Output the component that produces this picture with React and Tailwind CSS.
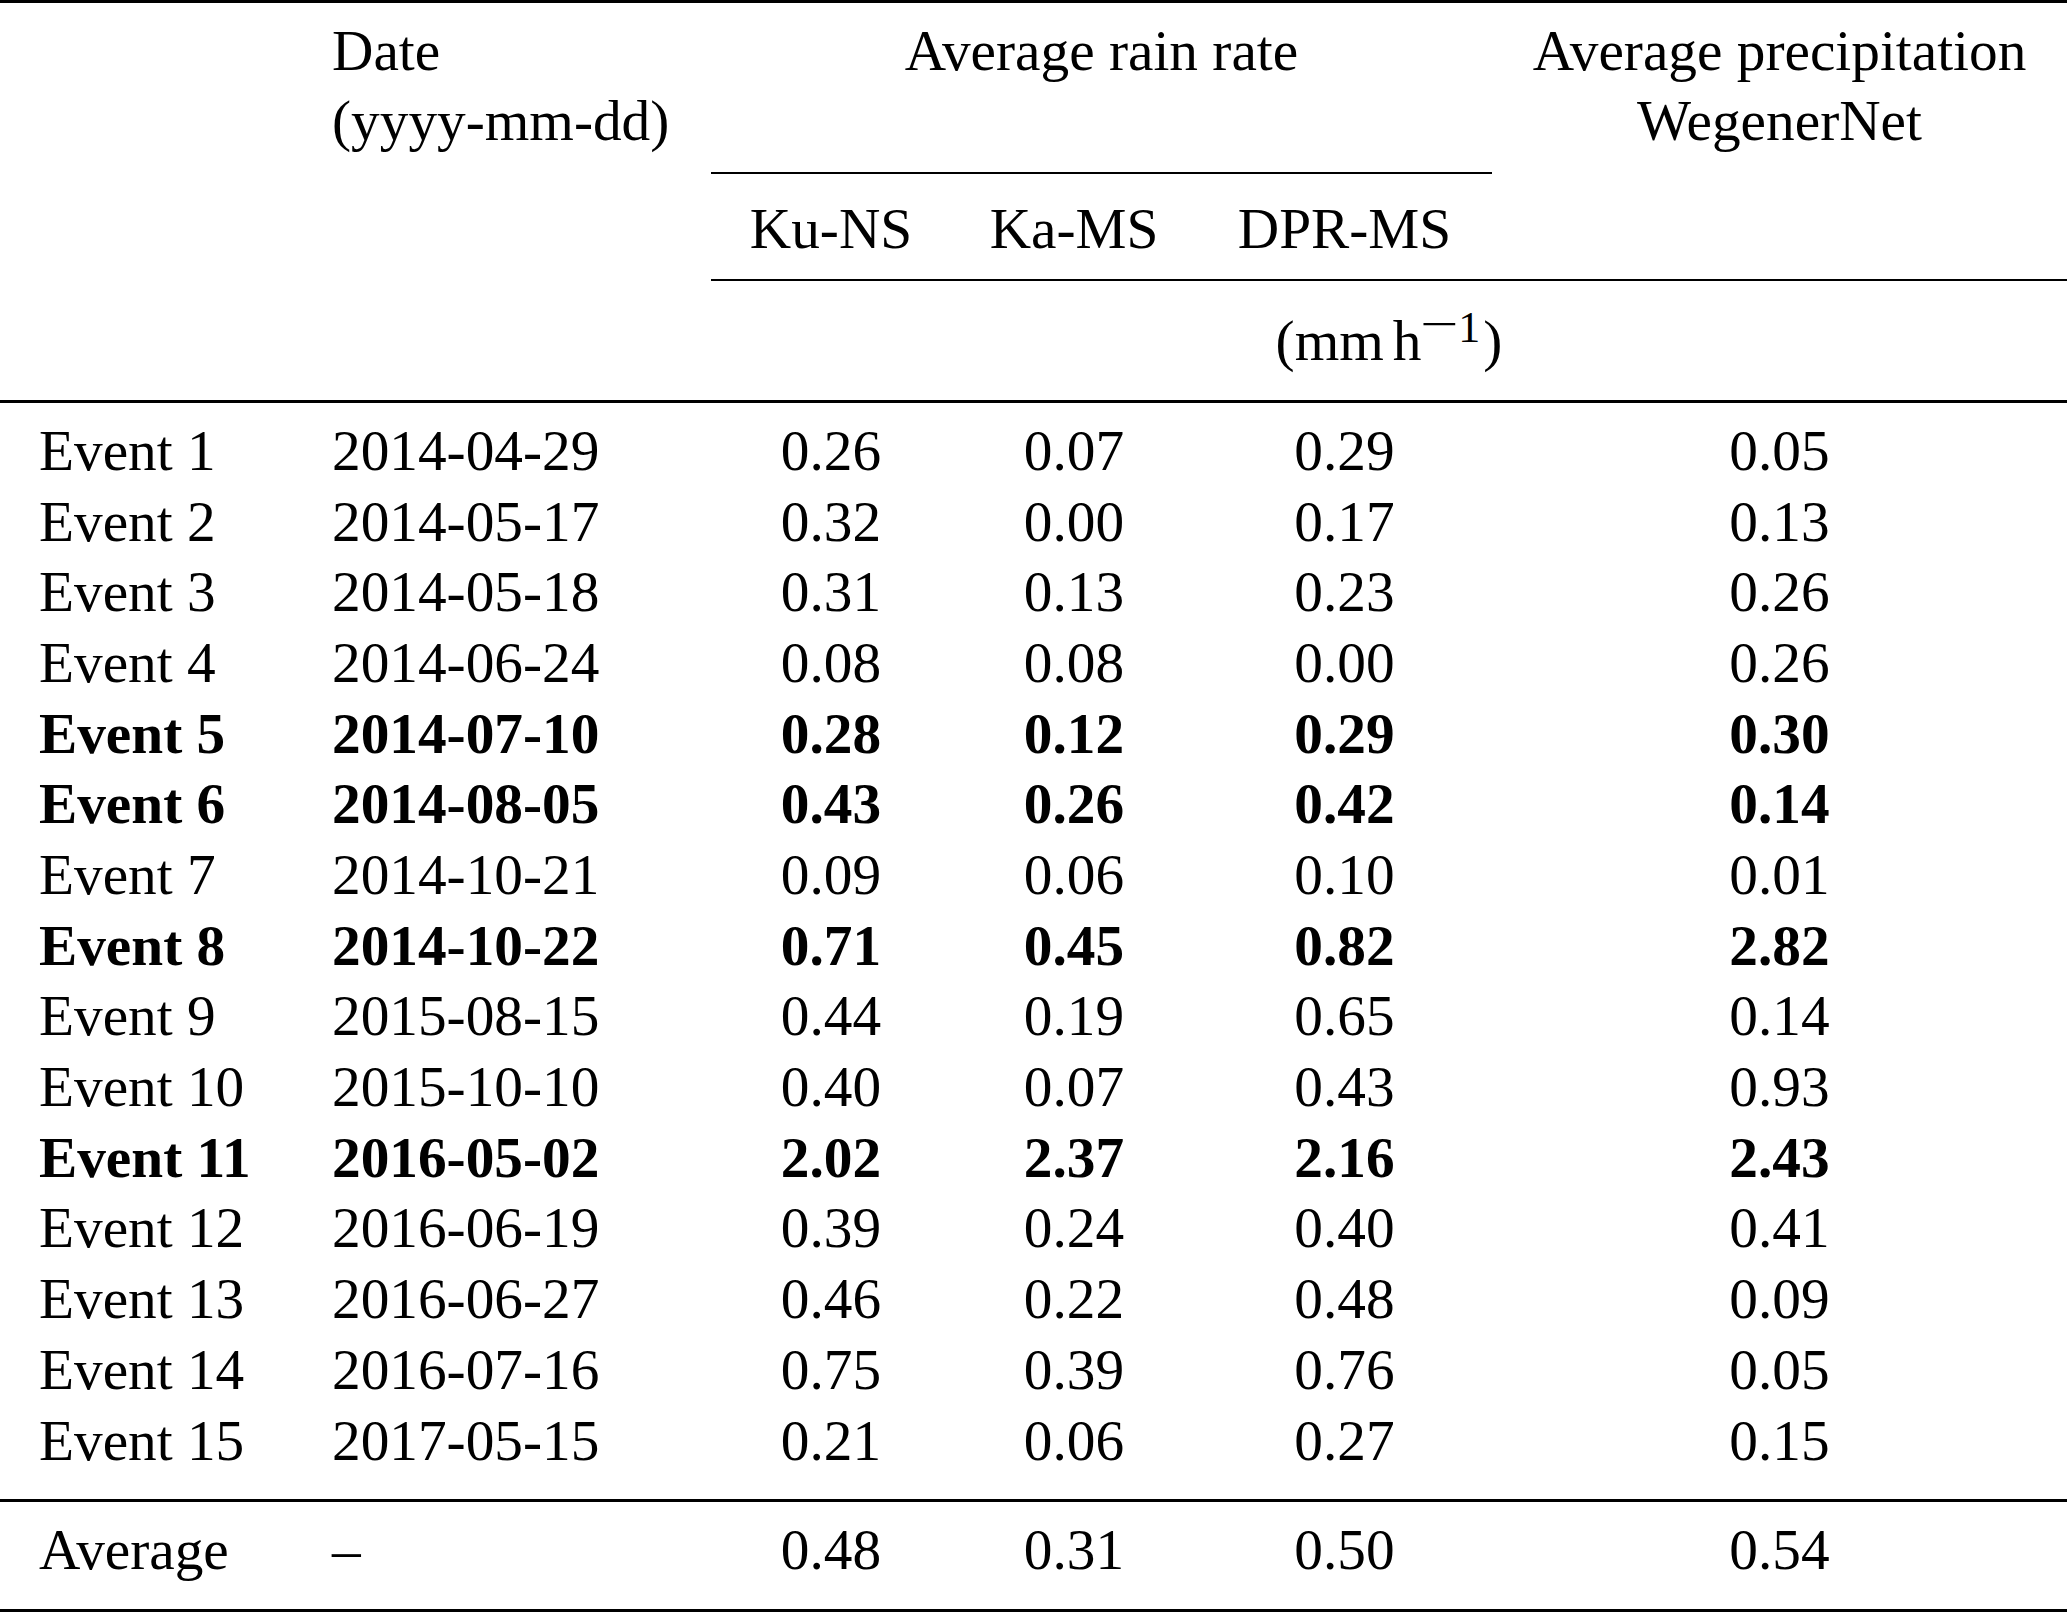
import React from "react";

const COLS = "grid grid-cols-[332px_379px_240px_246px_295px_575px]";

const rows = [
  ["Event 1", "2014-04-29", "0.26", "0.07", "0.29", "0.05", false],
  ["Event 2", "2014-05-17", "0.32", "0.00", "0.17", "0.13", false],
  ["Event 3", "2014-05-18", "0.31", "0.13", "0.23", "0.26", false],
  ["Event 4", "2014-06-24", "0.08", "0.08", "0.00", "0.26", false],
  ["Event 5", "2014-07-10", "0.28", "0.12", "0.29", "0.30", true],
  ["Event 6", "2014-08-05", "0.43", "0.26", "0.42", "0.14", true],
  ["Event 7", "2014-10-21", "0.09", "0.06", "0.10", "0.01", false],
  ["Event 8", "2014-10-22", "0.71", "0.45", "0.82", "2.82", true],
  ["Event 9", "2015-08-15", "0.44", "0.19", "0.65", "0.14", false],
  ["Event 10", "2015-10-10", "0.40", "0.07", "0.43", "0.93", false],
  ["Event 11", "2016-05-02", "2.02", "2.37", "2.16", "2.43", true],
  ["Event 12", "2016-06-19", "0.39", "0.24", "0.40", "0.41", false],
  ["Event 13", "2016-06-27", "0.46", "0.22", "0.48", "0.09", false],
  ["Event 14", "2016-07-16", "0.75", "0.39", "0.76", "0.05", false],
  ["Event 15", "2017-05-15", "0.21", "0.06", "0.27", "0.15", false],
];

function Row({ r }) {
  const [a, b, c, d, e, f, bold] = r;
  return (
    <div className={`${COLS} h-[70.7px] leading-[70.7px] ${bold ? "font-bold" : "font-normal"}`}>
      <div className="pl-[39px] whitespace-nowrap">{a}</div>
      <div className="whitespace-nowrap">{b}</div>
      <div className="text-center">{c}</div>
      <div className="text-center">{d}</div>
      <div className="text-center">{e}</div>
      <div className="text-center">{f}</div>
    </div>
  );
}

export default function App() {
  return (
    <div className="w-[2067px] h-[1613px] bg-white text-black font-['Liberation_Serif','Times_New_Roman',serif] text-[57.3px] overflow-hidden">
      <div className="h-[3px] bg-black" />
      <div className={`${COLS} grid-rows-[169px_2px_105px_2px_119px]`}>
        <div className="row-start-1 col-start-2 pt-[13.3px] leading-[70px] whitespace-nowrap">
          <div>Date</div>
          <div>(yyyy-mm-dd)</div>
        </div>
        <div className="row-start-1 col-start-3 col-span-3 pt-[13.3px] leading-[70px] text-center whitespace-nowrap">
          Average rain rate
        </div>
        <div className="row-start-1 col-start-6 pt-[13.3px] leading-[70px] text-center whitespace-nowrap">
          <div>Average precipitation</div>
          <div>WegenerNet</div>
        </div>
        <div className="row-start-2 col-start-3 col-span-3 bg-black" />
        <div className="row-start-3 col-start-3 pt-[19.6px] leading-[70px] text-center whitespace-nowrap">Ku-NS</div>
        <div className="row-start-3 col-start-4 pt-[19.6px] leading-[70px] text-center whitespace-nowrap">Ka-MS</div>
        <div className="row-start-3 col-start-5 pt-[19.6px] leading-[70px] text-center whitespace-nowrap">DPR-MS</div>
        <div className="row-start-4 col-start-3 col-span-4 bg-black" />
        <div className="row-start-5 col-start-3 col-span-4 pt-[24.6px] leading-[70px] text-center whitespace-nowrap">
          (mm<span className="ml-[9px]">h</span>
          <span className="relative -top-[18px] text-[44px] leading-none">
            <span className="relative -top-[3px] inline-block scale-x-[1.55] mx-[6px]">−</span>1
          </span>
          <span className="ml-[3px]">)</span>
        </div>
      </div>
      <div className="h-[3px] bg-black" />
      <div className="h-[1096px] pt-[12.9px]">
        {rows.map((r) => (
          <Row key={r[0]} r={r} />
        ))}
      </div>
      <div className="h-[3px] bg-black" />
      <div className="h-[107px] pt-[13.2px]">
        <div className={`${COLS} h-[70.7px] leading-[70.7px]`}>
          <div className="pl-[39px]">Average</div>
          <div>–</div>
          <div className="text-center">0.48</div>
          <div className="text-center">0.31</div>
          <div className="text-center">0.50</div>
          <div className="text-center">0.54</div>
        </div>
      </div>
      <div className="h-[3px] bg-black" />
    </div>
  );
}
